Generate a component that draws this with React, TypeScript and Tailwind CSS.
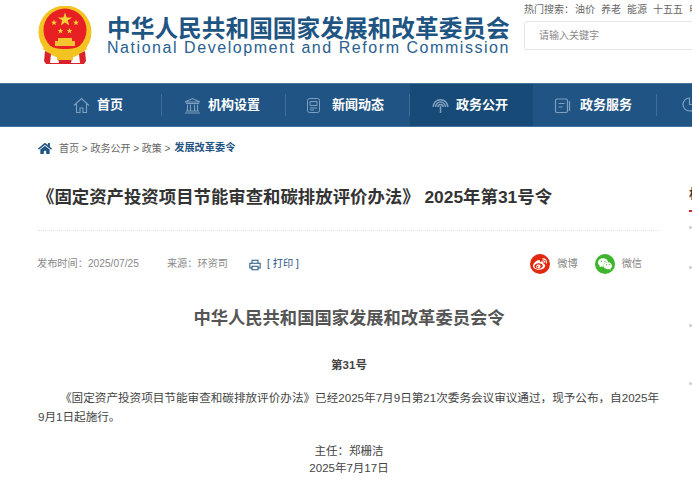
import { FaHome } from "react-icons/fa"
import { SiSinaweibo, SiWechat } from "react-icons/si"

const NAV = [
  { label: "首页", w: "w-[162px]", pr: "pr-[38px]", icon: "home", sep: true },
  { label: "机构设置", w: "w-[124px]", pr: "pr-[25px]", icon: "bank", sep: true },
  { label: "新闻动态", w: "w-[124px]", pr: "pr-[25px]", icon: "news", sep: true },
  { label: "政务公开", w: "w-[123px]", pr: "pr-[25px]", icon: "wifi", active: true },
  { label: "政务服务", w: "w-[124px]", pr: "pr-[24px]", icon: "doc", sep: true },
]

const HOT = ["油价", "养老", "能源", "十五五", "电"]

const CJK = "font-['Liberation_Sans','Noto_Sans_CJK_SC',sans-serif]"

function Emblem() {
  return (
    <svg width="54" height="58" viewBox="0 0 54 58" className="block">
      <circle cx="27" cy="26" r="26.5" fill="#f3c322" />
      <circle cx="27" cy="24" r="21.5" fill="#e81f23" />
      <path d="M27 6.500l1.700 5h5.300l-4.300 3.100 1.600 5-4.300-3.100-4.300 3.100 1.600-5-4.300-3.100h5.300z" fill="#f8d43a" />
      <path d="M16 13.500l.8 2.200h2.300l-1.900 1.400.7 2.200-1.900-1.300-1.900 1.300.7-2.200-1.900-1.400h2.300zM38 13.500l.8 2.200h2.300l-1.900 1.400.7 2.200-1.900-1.300-1.900 1.300.7-2.200-1.900-1.400h2.300zM22.500 22l.8 2h2.100l-1.700 1.300.6 2.100-1.800-1.200-1.800 1.200.6-2.100-1.700-1.300h2.100zM31.500 22l.8 2h2.100l-1.700 1.300.6 2.100-1.800-1.200-1.800 1.200.6-2.100-1.700-1.300h2.100z" fill="#f8d43a" />
      <path d="M20 32h14v3h3v5H17v-5h3z" fill="#f4c430" />
      <path d="M8 38c6 4 12 5 19 5s13-1 19-5l3 5c-6 5-14 7-22 7S11 48 5 43z" fill="#f3c322" />
      <path d="M7 45l6 3-1 9h9l-1-5h14l-1 5h9l-1-9 6-3 1 10-2 3H8l-2-3z" fill="#d9232a" />
      <path d="M19 49h16v5H19z" fill="#f3c322" />
    </svg>
  )
}

function NavIcon({ name }: { name: string }) {
  const cls = "w-[17px] h-[17px] stroke-[#7fa0bd] fill-none shrink-0"
  if (name === "home")
    return (
      <svg viewBox="0 0 17 17" strokeWidth="1.1" className={cls}>
        <path d="M1 8.500 8.500 1.500 16 8.500M3.500 7v8.500h3.500v-4.500h3v4.500h3.500V7" />
      </svg>
    )
  if (name === "bank")
    return (
      <svg viewBox="0 0 17 17" strokeWidth="1.1" className={cls}>
        <path d="M1 5 8.500 1.500 16 5zM2 6.500h13M3.500 7.500v6M6.500 7.500v6M10.500 7.500v6M13.500 7.500v6M2 14h13M1 16h15" />
      </svg>
    )
  if (name === "news")
    return (
      <svg viewBox="0 0 17 17" strokeWidth="1" className={`${cls} mr-[3px]`}>
        <rect x="2.500" y="1.500" width="12" height="14" rx="2" />
        <path d="M5 4.500h7v4H5zM5 11h7M5 13h4" />
      </svg>
    )
  if (name === "wifi")
    return (
      <svg viewBox="0 0 17 17" strokeWidth="1.500" className={cls}>
        <path d="M1.200 10a7.300 7.300 0 0 1 14.600 0M3.600 10a4.900 4.900 0 0 1 9.800 0M6 10a2.500 2.500 0 0 1 5 0M8.500 9v7" />
      </svg>
    )
  return (
    <svg viewBox="0 0 17 17" strokeWidth="1.200" className={`${cls} mr-[2px]`}>
      <rect x="1.500" y="2" width="12" height="13.500" rx="1.500" />
      <path d="M4.500 6.500h6M4.500 10h4M15.500 4v10" />
    </svg>
  )
}

export default function App() {
  return (
    <div className={`w-[692px] h-[480px] overflow-hidden bg-white ${CJK}`}>
      {/* Header */}
      <header className="flex h-[83px]">
        <div className="ml-[38px] mt-[6px] mr-[15px]">
          <Emblem />
        </div>
        <div className="w-[417px] pt-[17px]">
          <div className="text-[23.7px] leading-[24px] font-bold text-[#1f5583] whitespace-nowrap">中华人民共和国国家发展和改革委员会</div>
          <div className="text-[16px] leading-[14px] tracking-[1.55px] text-[#2a618f] whitespace-nowrap">National Development and Reform Commission</div>
        </div>
        <div className="flex-1 overflow-hidden">
          <div className="flex gap-[6px] mt-[1px] text-[10px] leading-[17px] text-[#666] whitespace-nowrap">
            <span className="-mr-[5px]">热门搜索：</span>
            {HOT.map(h => <span key={h}>{h}</span>)}
          </div>
          <div className="mt-[3px] h-[29px] w-[200px] border border-[#e5e5e5] rounded-[3px] pl-[14px] text-[10px] leading-[27px] text-[#888]">请输入关键字</div>
        </div>
      </header>

      {/* Nav */}
      <nav className="flex h-[44px] bg-[#1f5485] border-y border-[#5f88aa]/60 overflow-hidden">
        {NAV.map(item => (
          <div
            key={item.label}
            className={`flex items-center justify-end shrink-0 ${item.w} ${item.active ? "bg-[#184a78]" : ""}`}
          >
            <div className={`flex items-center h-full ${item.pr} gap-[7px]`}>
              <NavIcon name={item.icon} />
              <span className="text-[13px] font-bold text-white whitespace-nowrap">{item.label}</span>
            </div>
            {item.sep && <div className="h-[22px] w-px bg-[#3f6f98]" />}
          </div>
        ))}
        <svg viewBox="0 0 15 15" fill="none" stroke="#7fa0bd" strokeWidth="1.200" className="ml-[25px] mt-[13px] w-[15px] h-[15px] shrink-0">
          <path d="M7.500 1a6.500 6.500 0 1 0 6.500 6.500H7.500z" />
        </svg>
      </nav>

      <div className="flex">
        {/* Article */}
        <main className="ml-[38px] w-[622px] shrink-0">
          <div className="flex items-center h-[20px] mt-[11px] text-[10px] text-[#666] whitespace-pre">
            <FaHome className="text-[#1f5583] w-[14px] h-[13px] mr-[7px]" />
            <span>首页 &gt; 政务公开 &gt; 政策 &gt; </span>
            <span className="ml-[1px] text-[10.2px] font-bold text-[#1f5583]">发展改革委令</span>
          </div>
          <h1 className="mt-[26px] ml-[-1px] text-[17.4px] leading-[26px] font-bold text-[#333] whitespace-nowrap">《固定资产投资项目节能审查和碳排放评价办法》 2025年第31号令</h1>
          <div className="mt-[20px] border-t border-dotted border-[#e4e4e4]" />

          <div className="flex items-center h-[30px] mt-[18px] text-[10.2px] text-[#888]">
            <span className="ml-[-1px]">发布时间：2025/07/25</span>
            <span className="ml-[28px]">来源：环资司</span>
            <svg viewBox="0 0 14 14" fill="none" stroke="#1f5583" strokeWidth="1.200" className="w-[12px] h-[12px] ml-[21px] mt-[2px]">
              <path d="M3.500 5V1.500h7V5M3.500 10.500H1V5h12v5.500h-2.500M3.500 8.500h7v4h-7z" />
            </svg>
            <span className="ml-[6px] text-[#1f5583]">[ 打印 ]</span>
            <div className="ml-auto flex items-center mr-[18px]">
              <span className="flex items-center justify-center w-[20px] h-[20px] rounded-full bg-[#df2a10]">
                <SiSinaweibo className="text-white w-[14px] h-[14px]" />
              </span>
              <span className="ml-[7px] text-[#888]">微博</span>
              <span className="ml-[17px] flex items-center justify-center w-[20px] h-[20px] rounded-full bg-[#3fb52f]">
                <SiWechat className="text-white w-[14px] h-[14px]" />
              </span>
              <span className="ml-[7px] text-[#888]">微信</span>
            </div>
          </div>

          <h2 className="mt-[26px] text-center text-[17.3px] leading-[26px] font-bold text-[#555]">中华人民共和国国家发展和改革委员会令</h2>
          <p className="mt-[24px] text-center text-[11.5px] leading-[20px] font-bold text-[#444]">第31号</p>
          <p className="mt-[13px] text-[11.6px] leading-[19px] text-[#444] indent-[22px]">《固定资产投资项目节能审查和碳排放评价办法》已经2025年7月9日第21次委务会议审议通过，现予公布，自2025年9月1日起施行。</p>
          <p className="mt-[17px] text-center text-[11.5px] leading-[17px] text-[#444]">主任：郑栅洁</p>
          <p className="text-center text-[11.5px] leading-[17px] text-[#444]">2025年7月17日</p>
        </main>

        {/* Right sidebar, cut off by the window */}
        <aside className="ml-[29px] flex-1 overflow-hidden pt-[59px]">
          <div className="text-[13px] leading-[16px] font-bold text-[#333] whitespace-nowrap">相关</div>
          <div className="h-[2px] bg-[#d9232a] mt-[8px]" />
          <div className="mt-[14px] w-[3px] h-[3px] rounded-full bg-[#ccc]" />
          <div className="mt-[37px] w-[3px] h-[3px] rounded-full bg-[#ccc]" />
          <div className="mt-[55px] w-[3px] h-[3px] rounded-full bg-[#ccc]" />
          <div className="mt-[55px] w-[3px] h-[3px] rounded-full bg-[#ccc]" />
        </aside>
      </div>
    </div>
  )
}
